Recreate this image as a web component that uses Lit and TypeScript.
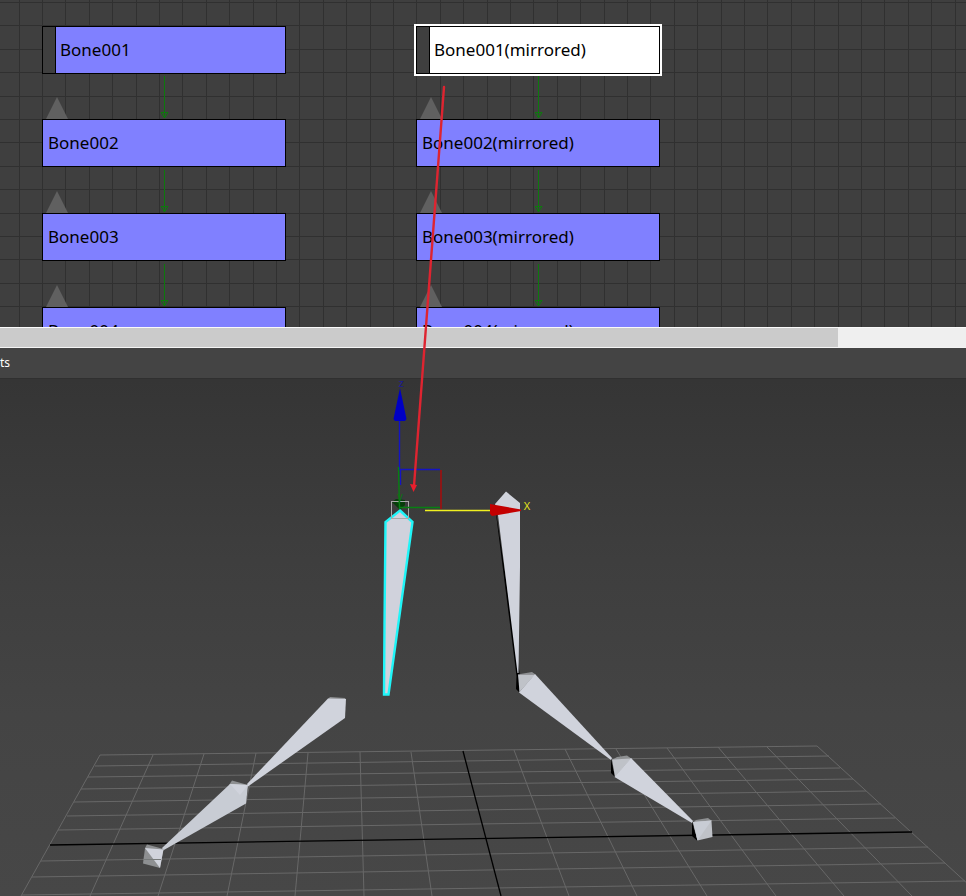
import { LitElement, html, css, svg } from "lit";
import { customElement, property, state } from "lit/decorators.js";
import { classMap } from "lit/directives/class-map.js";
import { styleMap } from "lit/directives/style-map.js";

interface BoneNode {
  name: string;
  x: number;
  y: number;
  root?: boolean;
}

const CHAINS = [
  { x: 42, suffix: "" },
  { x: 416, suffix: "(mirrored)" },
];
const ROWS = [26, 119, 213, 307];

const NODES: BoneNode[] = CHAINS.flatMap((chain) =>
  ROWS.map((y, i) => ({
    name: `Bone00${i + 1}${chain.suffix}`,
    x: chain.x,
    y,
    root: i === 0,
  }))
);

type Segment = [number, number, number, number];

/* Ground plane, columns running away from the camera */
const COLUMNS: Segment[] = [
  [100, 755, 21, 896],
  [153, 755, 90, 896],
  [204, 754, 158, 896],
  [256, 753, 227, 896],
  [308, 753, 295, 896],
  [360, 752, 364, 896],
  [411, 752, 432, 896],
  [514, 750, 569, 896],
  [565, 749, 637, 896],
  [616, 749, 707, 896],
  [667, 748, 776, 896],
  [718, 747, 844, 896],
  [767, 747, 912, 896],
  [817, 746, 981, 896],
];

/* Ground plane, rows from back to front */
const LINES: Segment[] = [
  [100, 755, 817, 746],
  [95, 766, 829, 756],
  [88, 777, 840, 768],
  [81, 789, 853, 779],
  [74, 802, 866, 791],
  [67, 816, 881, 804],
  [58, 830, 895, 818],
  [41, 861, 928, 847],
  [32, 877, 945, 863],
  [22, 895, 965, 881],
];

const line = ([x1, y1, x2, y2]: Segment, cls: string) =>
  svg`<line class=${cls} x1=${x1} y1=${y1} x2=${x2} y2=${y2}></line>`;

const SANS = css`"Tahoma", "Noto Sans", "DejaVu Sans", sans-serif`;

@customElement("schematic-node")
class SchematicNode extends LitElement {
  @property() name = "";
  @property({ type: Boolean }) root = false;
  @property({ type: Boolean }) selected = false;

  static styles = css`
    :host {
      display: block;
    }
    .node {
      display: flex;
      align-items: stretch;
      width: 244px;
      height: 48px;
      padding: 0;
      border: 1px solid #000;
      background: #8080ff;
      color: #000;
      font: 17px/46px ${SANS};
      text-align: left;
    }
    .node.selected {
      background: #fff;
      outline: 2px solid #fff;
    }
    .pivot {
      flex: none;
      width: 12px;
      border-right: 1px solid #000;
      background: #3f3f3f;
    }
    .name {
      padding-left: 5px;
      white-space: nowrap;
    }
    .node.root .name {
      padding-left: 4px;
    }
  `;

  render() {
    return html`<button
      class=${classMap({ node: true, selected: this.selected, root: this.root })}
      aria-pressed=${this.selected ? "true" : "false"}
    >
      ${this.root ? html`<span class="pivot"></span>` : null}
      <span class="name">${this.name}</span>
    </button>`;
  }
}

@customElement("schematic-view")
class SchematicView extends LitElement {
  @state() private selected = "Bone001(mirrored)";

  static styles = css`
    :host {
      display: block;
      position: relative;
      height: 327px;
      overflow: hidden;
      background: #3f3f3f;
    }
    .backdrop {
      display: block;
      width: 100%;
      height: 100%;
    }
    .rule {
      stroke: #303030;
    }
    .link {
      fill: none;
      stroke: #0d790d;
    }
    .collapse {
      fill: #606060;
    }
    .slot {
      position: absolute;
    }
  `;

  render() {
    const xs = [19, 42, 65, 89, 112];
    const ys = [2, 25, 49, 72, 96];
    return html`
      <svg class="backdrop" aria-hidden="true">
        <defs>
          <pattern id="grid" width="117" height="117" patternUnits="userSpaceOnUse">
            ${xs.map((x) => line([x + 0.5, 0, x + 0.5, 117], "rule"))}
            ${ys.map((y) => line([0, y + 0.5, 117, y + 0.5], "rule"))}
          </pattern>
        </defs>
        <rect width="100%" height="100%" fill="url(#grid)"></rect>
        ${NODES.filter((n) => !n.root).map(
          (n) => svg`
            <path class="collapse" d="M${n.x + 4} ${n.y}L${n.x + 15} ${n.y - 22}L${n.x + 26} ${n.y}Z"></path>
            <path class="link" d="M${n.x + 122.5} ${n.y - 43}V${n.y - 1}M${n.x + 119} ${n.y - 6.5}H${n.x + 126}L${n.x + 122.5} ${n.y - 1}Z"></path>`
        )}
      </svg>
      ${NODES.map(
        (n) => html`<schematic-node
          class="slot"
          style=${styleMap({ left: `${n.x}px`, top: `${n.y}px` })}
          .name=${n.name}
          .root=${!!n.root}
          .selected=${n.name === this.selected}
          @click=${() => (this.selected = n.name)}
        ></schematic-node>`
      )}
    `;
  }
}

@customElement("bone-viewport")
class BoneViewport extends LitElement {
  static styles = css`
    :host {
      display: block;
      min-height: 517px;
      overflow: hidden;
      background: linear-gradient(#353535, #3e3e3e 35%, #444 65%, #474747);
    }
    .scene {
      display: block;
      width: 100%;
      height: 517px;
      overflow: visible;
    }
    .rule {
      stroke: #686868;
    }
    .axis {
      stroke: #000;
      stroke-width: 1.3;
    }
    .bone {
      fill: #d0d3dc;
    }
    .bone-alt {
      fill: #c8ccd4;
    }
    .cap {
      fill: #bfc2c8;
    }
    .shade {
      fill: #8e9092;
    }
    .dark {
      fill: #000;
    }
    .picked {
      fill: #d0d2dc;
      stroke: #1ff5f8;
      stroke-width: 2.4;
    }
    .z {
      stroke: #1414c4;
      stroke-width: 1.4;
      fill: none;
    }
    .z-head {
      fill: #0000c4;
    }
    .y {
      stroke: #078012;
      stroke-width: 1.4;
      fill: none;
    }
    .y-head {
      fill: #073d0b;
    }
    .x {
      stroke: #b00808;
      stroke-width: 1.4;
    }
    .x-head {
      fill: #c40000;
    }
    .x-line {
      stroke: #f0f020;
      stroke-width: 1.3;
    }
    .bracket {
      fill: none;
      stroke: #a8a8a8;
    }
    .label {
      font: 11px ${SANS};
      text-anchor: middle;
    }
    .label-x {
      fill: #e2e21c;
    }
    .label-y {
      fill: #0a7414;
    }
    .label-z {
      fill: #1a1a94;
    }
  `;

  render() {
    return html`
      <svg class="scene" role="img" aria-label="Bone chains in the viewport">
        <g transform="translate(0 -379)">
          <g>
            ${COLUMNS.map((s) => line(s, "rule"))}
            ${LINES.map((s) => line(s, "rule"))}
            ${line([463, 751, 501, 896], "axis")}
            ${line([50, 845, 912, 832], "axis")}
          </g>

          <!-- source chain -->
          <path class="shade" d="M328 699L330 697L345 698L346 700Z"></path>
          <path class="bone" d="M328 698.500L346 699L345 718L248 786.500L247 784Z"></path>
          <path class="shade" d="M229 785L232 780.500L248 785Z"></path>
          <path class="bone-alt" d="M230 784L248 785L246 803.500L163 850.500L162 848Z"></path>
          <path class="bone" d="M230 784L248 785L240 795Z"></path>
          <path class="shade" d="M145 848L147 844.500L163.500 849L160 868L143 863.500Z"></path>
          <path class="bone" d="M145 848L163.500 849.500L160 868Z"></path>
          <path d="M143.500 859.500H161" stroke="#777b7b"></path>

          <!-- mirrored chain -->
          <path class="dark" d="M495 504L496 514L516.500 676L516 689L519 692L520 676Z"></path>
          <path class="bone" d="M506 491.500L520 503V567L518.500 673H517.500L498 515L495 504Z"></path>
          <path class="shade" d="M517.500 674.500L532 672L535.500 674.500Z"></path>
          <path class="cap" d="M518 674.500H535L519.500 692Z"></path>
          <path class="bone" d="M535 674L612 758L611 760L519 692.500Z"></path>
          <path class="dark" d="M611 759L615 777L611 773Z"></path>
          <path class="shade" d="M612 760L617 757L627 755.500L632 759Z"></path>
          <path class="cap" d="M612 759.500L631 758.500L615 777Z"></path>
          <path class="bone" d="M631 758L693 821L692 823L614.500 777Z"></path>
          <path class="dark" d="M692 822L697.500 841L692 836Z"></path>
          <path class="shade" d="M693 823L696 820L708 818L712 821Z"></path>
          <path class="cap" d="M693 822L711.500 820.500L712.500 837L697.500 840.500Z"></path>
          <path class="bone-alt" d="M693 822L711.500 820.500L697.500 840.500Z"></path>

          <!-- selected bone -->
          <path class="y-head" d="M392 502L396 499L405 500V505L400 510Z"></path>
          <path class="picked" d="M400 510.500L412.500 522L388.500 694.500H384L384.500 624L385.500 522Z"></path>
          <rect class="bracket" x="391.500" y="501.500" width="17" height="17"></rect>

          <!-- move gizmo -->
          <path class="z" d="M399.500 420V469.500H440M400.500 469V485"></path>
          <path class="z-head" d="M400 388L406.500 419L405 421H395L393.500 419Z"></path>
          <path class="y" d="M398.500 467L399.500 509M400 507.500H440"></path>
          <path class="x" d="M441 470V509"></path>
          <path class="x-line" d="M425 510.500H491"></path>
          <path class="x-head" d="M490 504L521 509.500V511L492 516L490 514Z"></path>
          <text class="label label-z" x="401" y="387">z</text>
          <text class="label label-y" x="400" y="500">y</text>
          <text class="label label-x" x="527" y="510">X</text>
        </g>
      </svg>
    `;
  }
}

@customElement("app-root")
class AppRoot extends LitElement {
  @state() private visibleShare = 0.8675;

  static styles = css`
    :host {
      position: relative;
      display: flex;
      flex-direction: column;
      min-height: 100vh;
      overflow: hidden;
      background: #3f3f3f;
      font: 12px/30px ${SANS};
    }
    .scrollbar {
      flex: none;
      height: 19px;
      border-top: 1px solid #fafafa;
      border-bottom: 1px solid #f4f4f4;
      background: #efefef;
    }
    .thumb {
      height: 100%;
      background: #cbcbcb;
    }
    .toolbar {
      flex: none;
      height: 30px;
      border-bottom: 1px solid #303030;
      background: #444;
      color: #fff;
    }
    .viewport {
      flex: 1;
    }
    .callout {
      position: absolute;
      inset: 0;
      width: 100%;
      height: 100%;
      pointer-events: none;
    }
    .stem {
      stroke: #de2430;
      stroke-width: 2.4;
      stroke-linecap: round;
    }
    .tip {
      fill: #ea1e2c;
    }
  `;

  render() {
    return html`
      <schematic-view></schematic-view>
      <div class="scrollbar">
        <div class="thumb" style=${styleMap({ width: `${this.visibleShare * 100}%` })}></div>
      </div>
      <div class="toolbar">ts</div>
      <bone-viewport class="viewport"></bone-viewport>
      <svg class="callout" aria-hidden="true">
        <line class="stem" x1="444" y1="87" x2="414" y2="486"></line>
        <path class="tip" d="M410 484L417 485L413.500 492Z"></path>
      </svg>
    `;
  }
}
